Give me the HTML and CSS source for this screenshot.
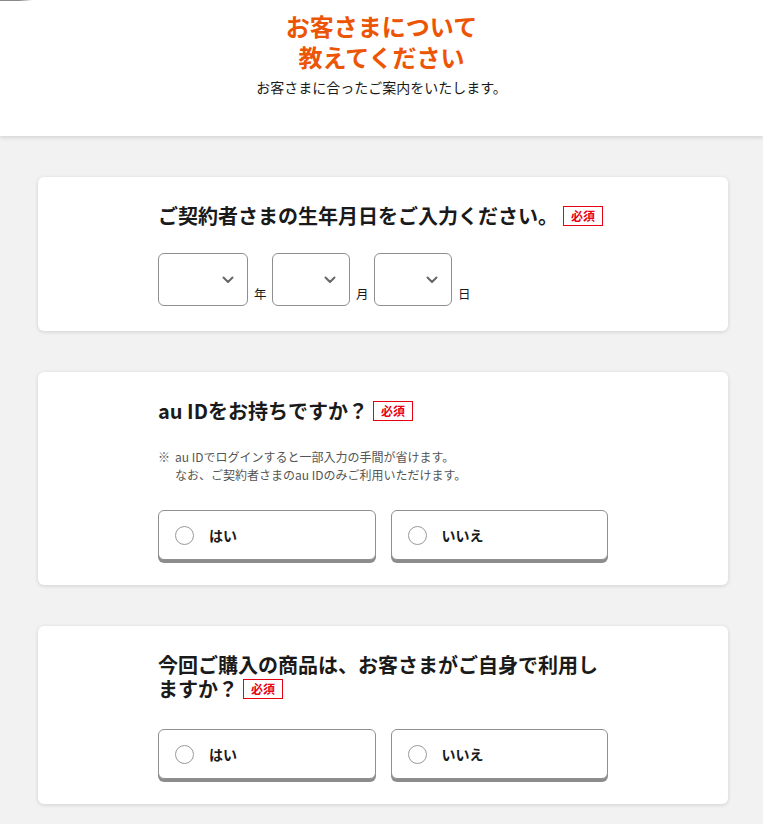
FILE: index.html
```html
<!DOCTYPE html>
<html lang="ja">
<head>
<meta charset="utf-8">
<title>お客さまについて教えてください</title>
<link rel="stylesheet" href="styles.css">
</head>
<body>
<div class="topbar"></div>
<header class="hero">
  <h1 class="hero-title">お客さまについて<br>教えてください</h1>
  <p class="hero-sub">お客さまに合ったご案内をいたします。</p>
</header>
<main class="main">
  <section class="card">
    <div class="card-inner">
      <h2 class="q-title">ご契約者さまの生年月日をご入力ください。<span class="badge">必須</span></h2>
      <div class="date-row">
        <div class="select select-year"><svg class="chev" width="12" height="8" viewBox="0 0 12 8"><path d="M1.5 1.5 L6 6 L10.5 1.5" fill="none" stroke="#666" stroke-width="2" stroke-linecap="round" stroke-linejoin="round"/></svg></div>
        <span class="unit">年</span>
        <div class="select"><svg class="chev" width="12" height="8" viewBox="0 0 12 8"><path d="M1.5 1.5 L6 6 L10.5 1.5" fill="none" stroke="#666" stroke-width="2" stroke-linecap="round" stroke-linejoin="round"/></svg></div>
        <span class="unit">月</span>
        <div class="select"><svg class="chev" width="12" height="8" viewBox="0 0 12 8"><path d="M1.5 1.5 L6 6 L10.5 1.5" fill="none" stroke="#666" stroke-width="2" stroke-linecap="round" stroke-linejoin="round"/></svg></div>
        <span class="unit">日</span>
      </div>
    </div>
  </section>
  <section class="card">
    <div class="card-inner">
      <h2 class="q-title">au IDをお持ちですか？<span class="badge">必須</span></h2>
      <div class="note">
        <span class="note-mark">※</span>
        <p class="note-text">au IDでログインすると一部入力の手間が省けます。<br>なお、ご契約者さまのau IDのみご利用いただけます。</p>
      </div>
      <div class="choices">
        <label class="choice"><span class="radio"></span><span class="choice-label">はい</span></label>
        <label class="choice"><span class="radio"></span><span class="choice-label">いいえ</span></label>
      </div>
    </div>
  </section>
  <section class="card">
    <div class="card-inner">
      <h2 class="q-title">今回ご購入の商品は、お客さまがご自身で利用しますか？<span class="badge">必須</span></h2>
      <div class="choices choices-tight">
        <label class="choice"><span class="radio"></span><span class="choice-label">はい</span></label>
        <label class="choice"><span class="radio"></span><span class="choice-label">いいえ</span></label>
      </div>
    </div>
  </section>
</main>
</body>
</html>
```
FILE: styles.css
```css
* { box-sizing: border-box; }
html, body { margin: 0; padding: 0; }
body {
  background: #f2f2f2;
  font-family: "Noto Sans CJK JP", "Noto Sans", sans-serif;
  color: #1a1a1a;
}
.topbar {
  position: absolute;
  top: 0;
  left: 0;
  width: 32px;
  height: 1px;
  background: linear-gradient(to right, #8a8a8a 0%, #8a8a8a 60%, rgba(138,138,138,0) 100%);
  z-index: 2;
}
.hero {
  background: #fff;
  height: 136px;
  padding-top: 10px;
  text-align: center;
  box-shadow: 0 2px 4px rgba(0,0,0,0.12);
  position: relative;
  z-index: 1;
}
.hero-title {
  margin: 0;
  font-size: 24px;
  line-height: 31px;
  font-weight: 700;
  color: #eb5505;
}
.hero-sub {
  margin: 5px 0 0;
  font-size: 14px;
  line-height: 20px;
  color: #1a1a1a;
}
.main {
  padding: 41px 35px 40px 38px;
  display: flex;
  flex-direction: column;
  gap: 41px;
}
.card {
  background: #fff;
  border-radius: 6px;
  box-shadow: 0 1px 4px rgba(0,0,0,0.14);
  padding: 27px 120px 25px;
}
.card-inner {
  max-width: 450px;
}
.q-title {
  margin: 0;
  font-size: 20px;
  line-height: 24px;
  font-weight: 700;
  color: #1a1a1a;
}
.badge {
  display: inline-block;
  margin-left: 5px;
  height: 20px;
  padding: 0 7px;
  border: 1px solid #e60012;
  color: #e60012;
  font-size: 12px;
  line-height: 18px;
  font-weight: 700;
  vertical-align: 3px;
}
.date-row {
  display: flex;
  align-items: flex-end;
  gap: 6px;
  margin-top: 25px;
}
.select {
  width: 78px;
  height: 53px;
  border: 1px solid #8f8f8f;
  border-radius: 6px;
  background: #fff;
  display: flex;
  align-items: center;
  justify-content: flex-end;
  padding-right: 13px;
}
.select-year { width: 90px; }
.chev { display: block; }
.unit {
  width: 12px;
  font-size: 12.5px;
  line-height: 13px;
  padding-bottom: 6px;
  color: #1a1a1a;
  white-space: nowrap;
}
.note {
  display: flex;
  margin-top: 25px;
  font-size: 12px;
  line-height: 18px;
  color: #555;
}
.note-mark { width: 17px; flex: none; }
.note-text { margin: 0; }
.choices {
  display: grid;
  grid-template-columns: 1fr 1fr;
  gap: 15px;
  margin-top: 26px;
}
.choices-tight { margin-top: 28px; }
.choice {
  height: 50px;
  border: 1px solid #8f8f8f;
  border-radius: 6px;
  background: #fff;
  box-shadow: 0 3px 0 #8c8c8c;
  display: flex;
  align-items: center;
  padding-left: 16px;
  cursor: pointer;
}
.radio {
  width: 19px;
  height: 19px;
  border: 1px solid #999;
  border-radius: 50%;
  flex: none;
  background: #fff;
}
.choice-label {
  margin-left: 15px;
  font-size: 14px;
  font-weight: 700;
  color: #1a1a1a;
}
```
